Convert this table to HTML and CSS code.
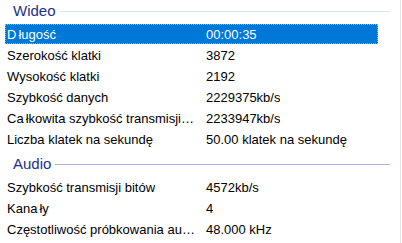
FILE: index.html
```html
<!DOCTYPE html>
<html lang="pl">
<head>
<meta charset="utf-8">
<link rel="stylesheet" href="styles.css">
</head>
<body>
<div class="list">
  <section class="group">
    <div class="group-header"><span class="group-title">Wideo</span><span class="group-line light"></span></div>
    <div class="rows">
      <div class="row selected"><span class="label">D<span class="gl">ł</span>ugość</span><span class="value">00:00:35</span></div>
      <div class="row"><span class="label">Szerokość klatki</span><span class="value">3872</span></div>
      <div class="row"><span class="label">Wysokość klatki</span><span class="value">2192</span></div>
      <div class="row"><span class="label">Szybkość danych</span><span class="value">2229375kb/s</span></div>
      <div class="row"><span class="label">Ca<span class="gl">ł</span>kowita szybkość transmisji bitów</span><span class="value">2233947kb/s</span></div>
      <div class="row"><span class="label">Liczba klatek na sekundę</span><span class="value">50.00 klatek na sekundę</span></div>
    </div>
  </section>
  <section class="group audio">
    <div class="group-header"><span class="group-title">Audio</span><span class="group-line"></span></div>
    <div class="rows">
      <div class="row"><span class="label">Szybkość transmisji bitów</span><span class="value">4572kb/s</span></div>
      <div class="row"><span class="label">Kana<span class="gl">ł</span>y</span><span class="value">4</span></div>
      <div class="row"><span class="label">Częstotliwość próbkowania audio</span><span class="value">48.000 kHz</span></div>
    </div>
  </section>
</div>
</body>
</html>
```

FILE: styles.css
```css
html, body {
  margin: 0;
  padding: 0;
  background: #ffffff;
}

body {
  width: 402px;
  height: 243px;
  overflow: hidden;
  font-family: "Liberation Sans", Arial, sans-serif;
  font-size: 13px;
  color: #000000;
}

.list {
  width: 400px;
  height: 243px;
  border-right: 1px solid #e3e3e3;
}

.group-header {
  display: flex;
  align-items: center;
  height: 21px;
  padding-left: 13px;
  padding-right: 10px;
  margin-bottom: 3px;
}

.audio .group-header {
  margin-top: 4px;
}

.group-title {
  font-size: 15px;
  color: #1e3287;
  line-height: 21px;
}

.group-line {
  flex: 1;
  height: 1px;
  margin-left: 4px;
  margin-top: 1px;
  background: #aab6d9;
}

.group-line.light {
  background: #dde4ef;
}

.rows {
  display: flex;
  flex-direction: column;
  gap: 1px;
}

.row {
  display: flex;
  align-items: center;
  height: 20px;
  width: 373px;
  margin-left: 5px;
  box-sizing: border-box;
  white-space: nowrap;
}

.row.selected {
  background: #0078d7;
  color: #ffffff;
  outline: 1px dotted #f2a03c;
  outline-offset: -1px;
}

.label {
  width: 201px;
  flex: none;
  box-sizing: border-box;
  padding: 0 10px 0 2px;
  overflow: hidden;
  text-overflow: ellipsis;
}

.gl {
  margin-left: 2px;
}

.value {
  overflow: hidden;
}
```
